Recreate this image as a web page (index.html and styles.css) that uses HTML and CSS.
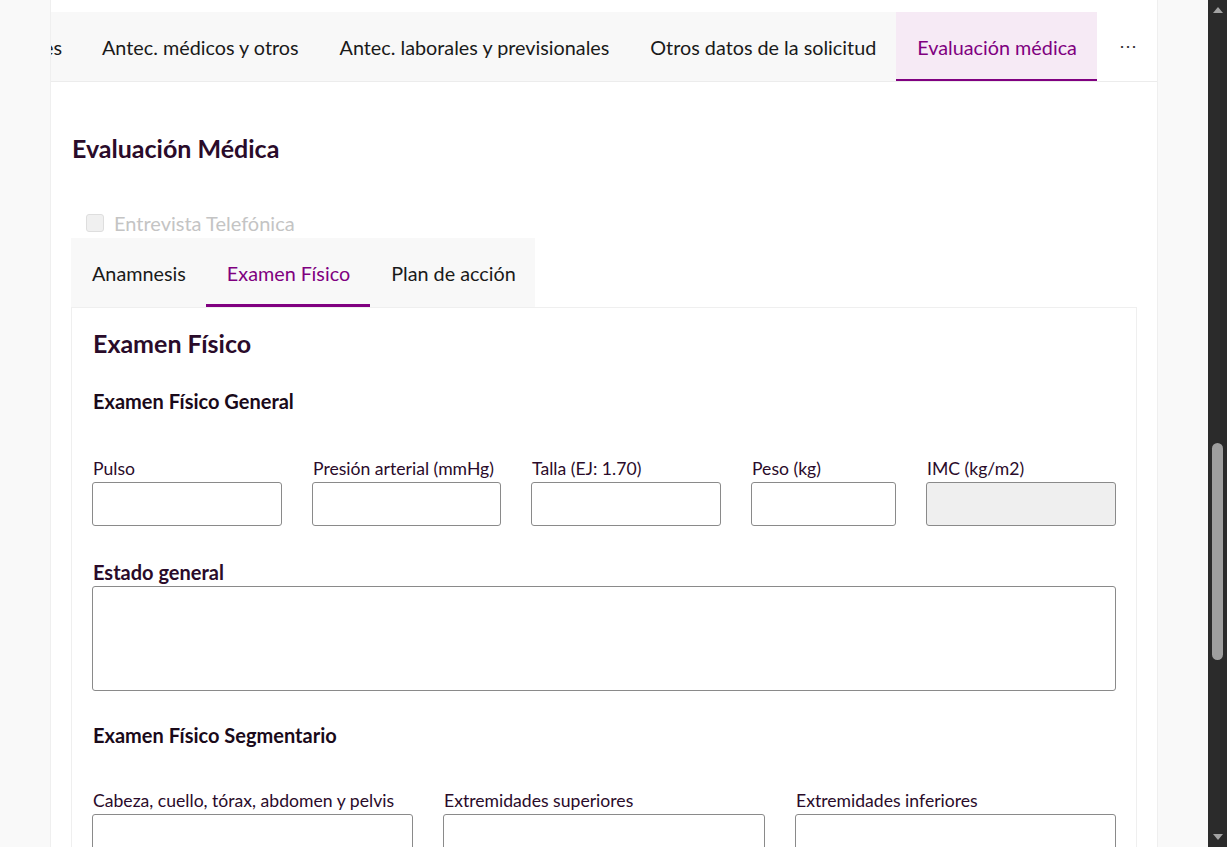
FILE: index.html
```html
<!DOCTYPE html>
<html lang="es">
<head>
<meta charset="utf-8">
<title>Evaluación Médica</title>
<link rel="stylesheet" href="styles.css">
</head>
<body>
<div class="page">
  <div class="gutter"></div>
  <main class="main">
    <nav class="tabs">
      <div class="tab tab-cut"><span class="cut">es</span></div>
      <div class="tab">Antec. médicos y otros</div>
      <div class="tab">Antec. laborales y previsionales</div>
      <div class="tab">Otros datos de la solicitud</div>
      <div class="tab tab-active">Evaluación médica</div>
      <div class="tab tab-more">⋯</div>
    </nav>

    <section class="content">
      <h1 class="title">Evaluación Médica</h1>
      <label class="check">
        <span class="box"></span>
        <span class="check-text">Entrevista Telefónica</span>
      </label>

      <div class="subtabs">
        <div class="subtab">Anamnesis</div>
        <div class="subtab subtab-active">Examen Físico</div>
        <div class="subtab">Plan de acción</div>
      </div>

      <div class="panel">
        <h2 class="panel-title">Examen Físico</h2>
        <h3 class="section-title">Examen Físico General</h3>
        <div class="row row-five">
          <div class="field"><div class="label">Pulso</div><div class="input"></div></div>
          <div class="field"><div class="label">Presión arterial (mmHg)</div><div class="input"></div></div>
          <div class="field"><div class="label">Talla (EJ: 1.70)</div><div class="input"></div></div>
          <div class="field"><div class="label">Peso (kg)</div><div class="input"></div></div>
          <div class="field"><div class="label">IMC (kg/m2)</div><div class="input input-disabled"></div></div>
        </div>
        <div class="label-bold">Estado general</div>
        <div class="textarea"></div>
        <h3 class="section-title section-seg">Examen Físico Segmentario</h3>
        <div class="row row-three">
          <div class="field"><div class="label">Cabeza, cuello, tórax, abdomen y pelvis</div><div class="input"></div></div>
          <div class="field"><div class="label">Extremidades superiores</div><div class="input"></div></div>
          <div class="field"><div class="label">Extremidades inferiores</div><div class="input"></div></div>
        </div>
      </div>
    </section>
  </main>
  <div class="gutter"></div>
  <div class="scrollbar">
    <div class="arrow arrow-up"></div>
    <div class="track"><div class="thumb"></div></div>
    <div class="arrow arrow-down"></div>
  </div>
</div>
</body>
</html>
```

FILE: styles.css
```css
* { box-sizing: border-box; }
html, body { margin: 0; padding: 0; height: 100%; overflow: hidden; }
body {
  font-family: Lato, "Open Sans", "Liberation Sans", sans-serif;
  color: #1c1c1c;
  background: #f9f9f9;
}
.page {
  display: flex;
  height: 847px;
  width: 1227px;
}
.gutter {
  width: 50px;
  flex: none;
  background: #f9f9f9;
}
.main {
  width: 1108px;
  flex: none;
  background: #fff;
  border-left: 1px solid #efefef;
  border-right: 1px solid #efefef;
  padding-top: 12px;
  overflow: hidden;
}
.tabs {
  display: flex;
  height: 70px;
  background: #f8f8f8;
  border-bottom: 1px solid #ececec;
  overflow: hidden;
}
.tab {
  display: flex;
  align-items: center;
  padding: 3px 20px 0 21px;
  font-size: 19.8px;
  color: #1a1a1a;
  white-space: nowrap;
  border-bottom: 3px solid transparent;
}
.tab-cut {
  padding-left: 0;
  padding-right: 19px;
  overflow: hidden;
}
.cut { margin-left: -8px; }
.tab-active {
  background: #f6eaf5;
  color: #800080;
  border-bottom-color: #800080;
  margin-bottom: -1px;
}
.tab-more {
  background: #fff;
  flex: 1;
  padding-left: 22px;
  padding-top: 0;
  font-size: 18px;
  color: #333;
}
.content {
  padding: 0 20px;
}
.title {
  margin: 51px 0 0 1px;
  font-size: 25px;
  line-height: 30px;
  font-weight: 700;
  color: #2a0b2a;
}
.check {
  display: flex;
  align-items: center;
  gap: 10px;
  margin: 49px 0 0 15px;
  height: 22px;
}
.box {
  width: 18px;
  height: 18px;
  border: 1px solid #dedede;
  background: #f0f0f0;
  border-radius: 3px;
}
.check-text {
  font-size: 20px;
  color: #c4c4c4;
}
.subtabs {
  display: flex;
  background: #f8f8f8;
  height: 69px;
  margin-top: 4px;
  width: 464px;
}
.subtab {
  display: flex;
  align-items: center;
  padding: 3px 20px 0 21px;
  font-size: 19.8px;
  color: #1a1a1a;
  border-bottom: 3px solid transparent;
  white-space: nowrap;
}
.subtab-active {
  color: #800080;
  border-bottom-color: #800080;
}
.panel {
  border: 1px solid #efefef;
  padding: 0 20px 40px;
}
.panel-title {
  margin: 20px 0 0 1px;
  font-size: 25px;
  line-height: 30px;
  font-weight: 700;
  color: #2a0b2a;
}
.section-title {
  margin: 31px 0 0 1px;
  font-size: 20px;
  line-height: 24px;
  font-weight: 700;
  color: #1a0a1a;
}
.row {
  display: grid;
  column-gap: 30px;
  margin-top: 45px;
}
.row-five { grid-template-columns: 190px 189px 190px 145px 190px; }
.row-three { grid-template-columns: 321px 322px 321px; }
.label {
  font-size: 17.6px;
  line-height: 22px;
  color: #2a0b2a;
  margin-left: 1px;
  margin-bottom: 2px;
  white-space: nowrap;
}
.input {
  height: 44px;
  border: 1px solid #8a8a8a;
  border-radius: 3px;
  background: #fff;
}
.input-disabled { background: #efefef; }
.label-bold {
  margin: 34px 0 2px 1px;
  font-size: 20px;
  line-height: 24px;
  font-weight: 700;
  color: #2a0b2a;
}
.textarea {
  height: 105px;
  border: 1px solid #8a8a8a;
  border-radius: 3px;
}
.section-seg { margin-top: 32px; }
.row-three { margin-top: 43px; }

.scrollbar {
  width: 19px;
  flex: none;
  background: #2b2b2b;
  display: flex;
  flex-direction: column;
  align-items: center;
}
.track {
  flex: 1;
  width: 100%;
  display: flex;
  justify-content: center;
}
.thumb {
  width: 11px;
  height: 217px;
  margin-top: 423px;
  background: #9f9f9f;
  border-radius: 6px;
}
.arrow {
  width: 0;
  height: 0;
  margin: 7px 0;
  border-left: 5px solid transparent;
  border-right: 5px solid transparent;
}
.arrow-up { border-bottom: 6px solid #a3a3a3; }
.arrow-down { border-top: 6px solid #a3a3a3; }
```
